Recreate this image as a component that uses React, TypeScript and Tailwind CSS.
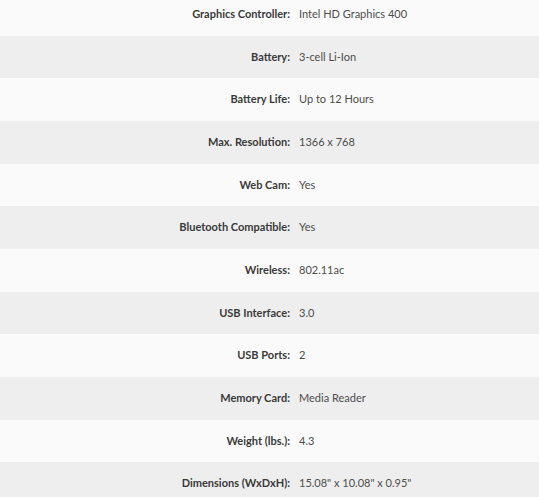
import React from "react";

const rows: [string, string][] = [
  ["Graphics Controller:", "Intel HD Graphics 400"],
  ["Battery:", "3-cell Li-Ion"],
  ["Battery Life:", "Up to 12 Hours"],
  ["Max. Resolution:", "1366 x 768"],
  ["Web Cam:", "Yes"],
  ["Bluetooth Compatible:", "Yes"],
  ["Wireless:", "802.11ac"],
  ["USB Interface:", "3.0"],
  ["USB Ports:", "2"],
  ["Memory Card:", "Media Reader"],
  ["Weight (lbs.):", "4.3"],
  ["Dimensions (WxDxH):", "15.08\" x 10.08\" x 0.95\""],
];

export default function App() {
  return (
    <div className="w-[539px] h-[497px] overflow-hidden bg-[#fafafa]" style={{ fontFamily: "Lato, 'Open Sans', sans-serif" }}>
      <div className="-mt-[7.2px]">
        {rows.map(([k, v], i) => (
          <div
            key={k}
            className={`flex items-center h-[42.7px] text-[11px] ${i % 2 === 1 ? "bg-[#eeeeee]" : "bg-[#fafafa]"}`}
          >
            <div className="w-[290px] text-right font-bold text-[#3a3a3a]">{k}</div>
            <div className="pl-[9px] text-[#4d4d4d]">{v}</div>
          </div>
        ))}
      </div>
    </div>
  );
}
